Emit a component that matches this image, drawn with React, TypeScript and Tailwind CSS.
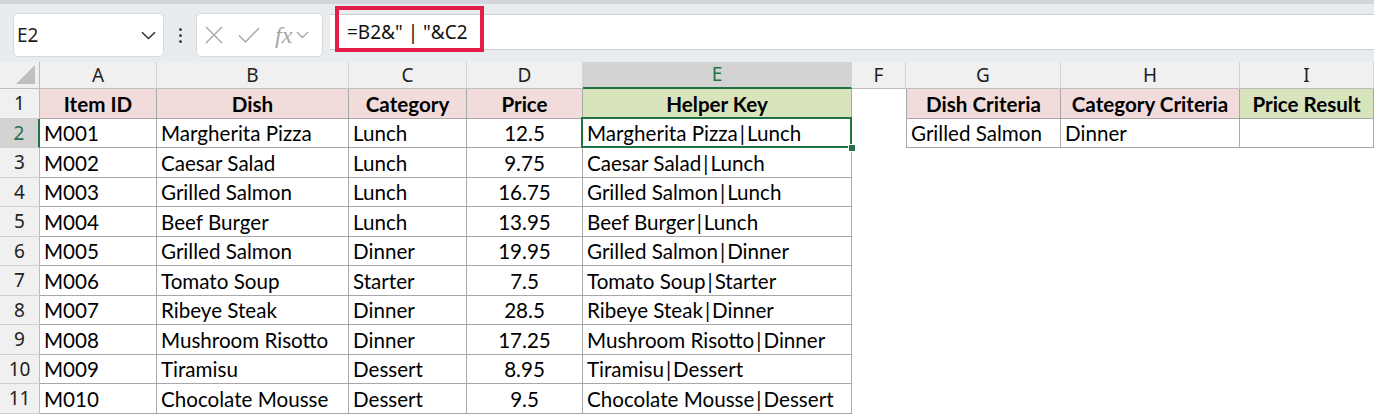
import React from "react";

const colW = ["w-[117px]", "w-[192px]", "w-[118px]", "w-[116px]", "w-[269px]", "w-[54px]", "w-[155px]", "w-[179px]", "flex-1"];
const letters = ["A", "B", "C", "D", "E", "F", "G", "H", "I"];

type Kind = "pink" | "green" | "data" | "num" | "blank" | "empty";
type C = { t?: string; k: Kind; l?: boolean; sel?: boolean; key2?: string };

const rows: string[][] = [
  ["M001", "Margherita Pizza", "Lunch", "12.5"],
  ["M002", "Caesar Salad", "Lunch", "9.75"],
  ["M003", "Grilled Salmon", "Lunch", "16.75"],
  ["M004", "Beef Burger", "Lunch", "13.95"],
  ["M005", "Grilled Salmon", "Dinner", "19.95"],
  ["M006", "Tomato Soup", "Starter", "7.5"],
  ["M007", "Ribeye Steak", "Dinner", "28.5"],
  ["M008", "Mushroom Risotto", "Dinner", "17.25"],
  ["M009", "Tiramisu", "Dessert", "8.95"],
  ["M010", "Chocolate Mousse", "Dessert", "9.5"],
];

function cellsFor(i: number): C[] {
  if (i === 0) {
    return [
      { t: "Item ID", k: "pink" },
      { t: "Dish", k: "pink" },
      { t: "Category", k: "pink" },
      { t: "Price", k: "pink" },
      { t: "Helper Key", k: "green" },
      { k: "blank" },
      { t: "Dish Criteria", k: "pink", l: true },
      { t: "Category Criteria", k: "pink" },
      { t: "Price Result", k: "green" },
    ];
  }
  const r = rows[i - 1];
  const base: C[] = [
    { t: r[0], k: "data" },
    { t: r[1], k: "data" },
    { t: r[2], k: "data" },
    { t: r[3], k: "num" },
    { t: r[1], key2: r[2], k: "data", sel: i === 1 },
    { k: "blank" },
  ];
  if (i === 1) {
    return [...base, { t: "Grilled Salmon", k: "data", l: true }, { t: "Dinner", k: "data" }, { k: "empty" }];
  }
  return [...base, { k: "blank" }, { k: "blank" }, { k: "blank" }];
}

function Cell({ c, w }: { c: C; w: string }) {
  if (c.k === "blank") return <div className={`${w} h-full bg-white`} />;
  const fill = c.k === "pink" ? "bg-[#f2dcdb]" : c.k === "green" ? "bg-[#d8e4bc]" : "bg-white";
  const align = c.k === "pink" || c.k === "green" ? "justify-center font-bold" : c.k === "num" ? "justify-center" : "justify-start pl-[4px]";
  return (
    <div
      className={`${w} relative h-full flex items-center pt-[2px] border-r border-b border-[#a8a8a8] ${c.l ? "border-l" : ""} ${fill} ${align}`}
    >
      <span className="whitespace-pre">
        {c.t}
        {c.key2 && (
          <>
            <span className="mx-[2px]">|</span>
            {c.key2}
          </>
        )}
      </span>
      {c.sel && (
        <>
          <div className="absolute left-[-2px] top-[-2px] right-[-1px] bottom-[-1px] border-2 border-[#217346] z-10" />
          <div className="absolute right-[-5px] bottom-[-5px] w-[8px] h-[8px] bg-[#217346] border border-white z-20" />
        </>
      )}
    </div>
  );
}

export default function App() {
  return (
    <div className="w-[1374px] h-[416px] overflow-hidden bg-white text-black">
      {/* formula bar */}
      <div className="relative h-[62px] bg-[#e9ecef] border-t-[4px] border-[#d2d6da] flex items-start pt-[9px] font-['Noto_Sans',sans-serif]">
        <div className="ml-[13px] w-[151px] h-[44px] bg-white border border-[#d9d9d9] rounded-[5px] flex items-center justify-between pl-[3px] pr-[7px]">
          <span className="text-[19px] text-[#1f1f1f]">E2</span>
          <svg width="15" height="9" viewBox="0 0 15 9" fill="none" stroke="#333" strokeWidth="1.6">
            <path d="M1 1.2 L7.5 7.5 L14 1.2" />
          </svg>
        </div>
        <div className="w-[32px] h-[44px] flex flex-col items-center justify-center gap-[3px]">
          <span className="w-[3px] h-[3px] bg-[#444] rounded-full" />
          <span className="w-[3px] h-[3px] bg-[#444] rounded-full" />
          <span className="w-[3px] h-[3px] bg-[#444] rounded-full" />
        </div>
        <div className="w-[127px] h-[44px] bg-white border border-[#d9d9d9] rounded-[5px] flex items-center pl-[8px] gap-[15px]">
          <svg width="18" height="18" viewBox="0 0 18 18" stroke="#a6a6a6" strokeWidth="1.4" fill="none">
            <path d="M1 1 L17 17 M17 1 L1 17" />
          </svg>
          <svg width="22" height="16" viewBox="0 0 22 16" stroke="#a6a6a6" strokeWidth="1.4" fill="none">
            <path d="M1 8.5 L7.5 15 L21 1" />
          </svg>
          <div className="flex items-center gap-[4px]">
            <span className="font-['Liberation_Serif',serif] italic text-[24px] text-[#a6a6a6] leading-none">fx</span>
            <svg width="13" height="8" viewBox="0 0 13 8" fill="none" stroke="#a6a6a6" strokeWidth="1.4">
              <path d="M1 1 L6.5 6.5 L12 1" />
            </svg>
          </div>
        </div>
        <div className="ml-[7px] flex-1 h-[36px] mt-[1px] bg-white border-y border-[#cfcfcf] flex items-center pl-[17px]">
          <span className="text-[19px] text-[#111] whitespace-pre">=B2&amp;" | "&amp;C2</span>
        </div>
        <div className="absolute left-[335px] top-[2px] w-[149px] h-[46px] border-[4px] border-[#e11d48]" />
      </div>

      {/* column headers */}
      <div className="flex h-[27px] font-['Noto_Sans',sans-serif] text-[19px] text-[#222]">
        <div className="relative w-[40px] h-full bg-[#f0f0f0] border-r border-b border-[#bdbdbd]">
          <svg className="absolute right-[4px] bottom-[4px]" width="19" height="19" viewBox="0 0 19 19">
            <path d="M19 0 L19 19 L0 19 Z" fill="#bfbfbf" />
          </svg>
        </div>
        {letters.map((l, j) => (
          <div
            key={l}
            className={`${colW[j]} h-full flex items-center justify-center border-r border-[#d4d4d4] ${
              l === "E" ? "bg-[#d3d3d3] text-[#217346] border-b-2 border-b-[#217346]" : "bg-[#f0f0f0] border-b border-b-[#bdbdbd]"
            }`}
          >
            {l}
          </div>
        ))}
      </div>

      {/* rows */}
      {Array.from({ length: 11 }).map((_, i) => (
        <div key={i} className="flex h-[29.5px] font-['Lato',sans-serif] text-[20.6px]">
          <div
            className={`w-[40px] h-full flex items-center justify-center font-['Noto_Sans',sans-serif] text-[19px] border-b border-[#d0d0d0] ${
              i === 1 ? "bg-[#d3d3d3] text-[#217346] border-r-2 border-r-[#217346]" : "bg-[#f0f0f0] text-[#222] border-r border-r-[#bdbdbd]"
            }`}
          >
            {i + 1}
          </div>
          {cellsFor(i).map((c, j) => (
            <Cell key={j} c={c} w={colW[j]} />
          ))}
        </div>
      ))}
    </div>
  );
}
